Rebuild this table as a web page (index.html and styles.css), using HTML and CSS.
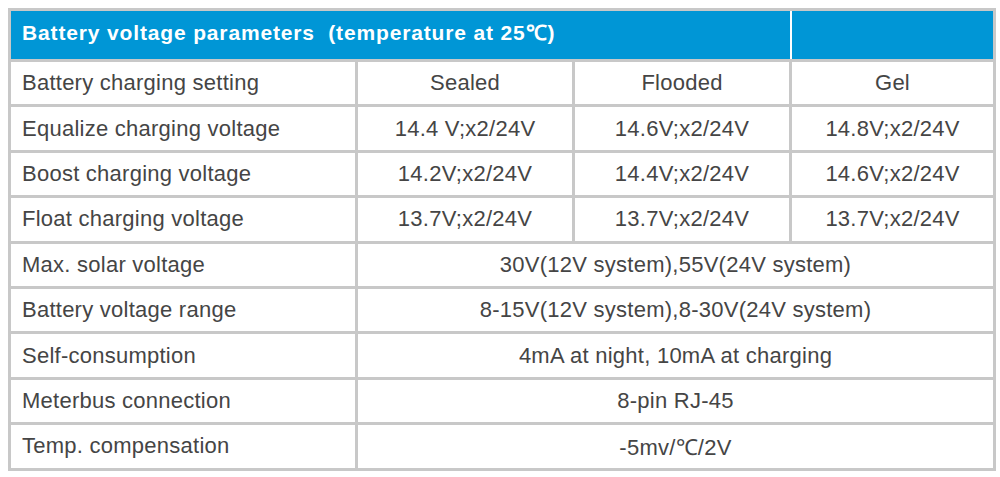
FILE: index.html
```html
<!DOCTYPE html>
<html lang="en">

<head>
	<meta charset="UTF-8">
	<meta name="viewport" content="width=device-width, initial-scale=1.0">
	<title>Battery voltage parameters</title>
	<link rel="stylesheet" href="styles.css">
</head>

<body>
	<table class="spec-table">
		<colgroup>
			<col class="col-label">
			<col class="col-sealed">
			<col class="col-flooded">
			<col class="col-gel">
		</colgroup>
		<tr class="head-row">
			<th colspan="3" class="head-title">Battery voltage parameters &nbsp;(temperature at 25℃)</th>
			<th class="head-blank"></th>
		</tr>
		<tr>
			<td>Battery charging setting</td>
			<td class="value">Sealed</td>
			<td class="value">Flooded</td>
			<td class="value">Gel</td>
		</tr>
		<tr>
			<td>Equalize charging voltage</td>
			<td class="value">14.4 V;x2/24V</td>
			<td class="value">14.6V;x2/24V</td>
			<td class="value">14.8V;x2/24V</td>
		</tr>
		<tr>
			<td>Boost charging voltage</td>
			<td class="value">14.2V;x2/24V</td>
			<td class="value">14.4V;x2/24V</td>
			<td class="value">14.6V;x2/24V</td>
		</tr>
		<tr>
			<td>Float charging voltage</td>
			<td class="value">13.7V;x2/24V</td>
			<td class="value">13.7V;x2/24V</td>
			<td class="value">13.7V;x2/24V</td>
		</tr>
		<tr>
			<td>Max. solar voltage</td>
			<td colspan="3" class="value">30V(12V system),55V(24V system)</td>
		</tr>
		<tr>
			<td>Battery voltage range</td>
			<td colspan="3" class="value">8-15V(12V system),8-30V(24V system)</td>
		</tr>
		<tr>
			<td>Self-consumption</td>
			<td colspan="3" class="value">4mA at night, 10mA at charging</td>
		</tr>
		<tr>
			<td>Meterbus connection</td>
			<td colspan="3" class="value">8-pin RJ-45</td>
		</tr>
		<tr>
			<td>Temp. compensation</td>
			<td colspan="3" class="value">-5mv/℃/2V</td>
		</tr>
	</table>
</body>

</html>
```

FILE: styles.css
```css
* {
	margin: 0;
	padding: 0;
	box-sizing: border-box;
}

body {
	background: white;
	font-family: "Liberation Sans", Arial, sans-serif;
	padding: 8px 0 0 8px;
}

.spec-table {
	width: 985px;
	border-collapse: collapse;
	table-layout: fixed;
	border: 3px solid #c8c8c8;
	color: #454545;
	font-size: 22px;
	letter-spacing: 0.25px;
}

.col-label {
	width: 347px;
}

.col-sealed {
	width: 217px;
}

.col-flooded {
	width: 217px;
}

.col-gel {
	width: 204px;
}

.spec-table td {
	border: 3px solid #c8c8c8;
	height: 45.4px;
	padding: 0 11px;
	vertical-align: middle;
}

.spec-table .value {
	text-align: center;
	padding: 0 4px;
}

.head-row th {
	background: rgb(0, 150, 214);
	color: white;
	height: 51px;
	border-top: 3px solid #c8c8c8;
	border-bottom: 3px solid #c8c8c8;
	font-size: 21px;
	letter-spacing: 0.85px;
	text-align: left;
	padding: 0 11px 6px;
}

.head-title {
	border-right: 2px solid white;
}
```
